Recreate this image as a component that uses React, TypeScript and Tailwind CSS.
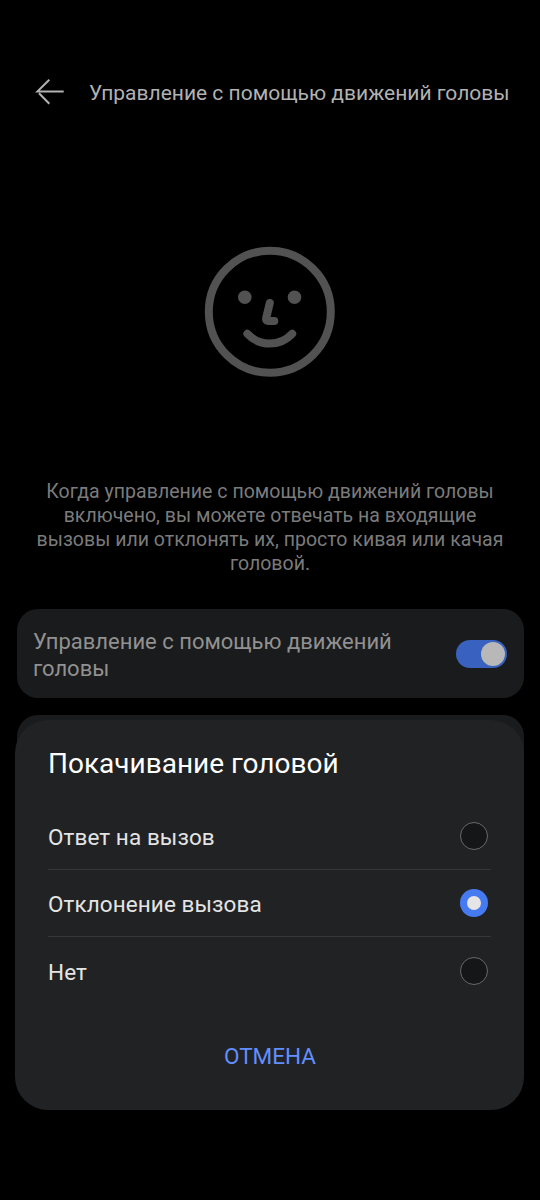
const options = [
  { label: 'Ответ на вызов', selected: false },
  { label: 'Отклонение вызова', selected: true },
  { label: 'Нет', selected: false },
];

function BackArrow() {
  return (
    <svg className="h-[28px] w-[30px] shrink-0" viewBox="0 0 30 28" fill="none" stroke="#b2b2b2" strokeWidth="2" strokeLinecap="butt">
      <path d="M14.3 1.8 2.3 13.6H28.7M4 15.3 14.3 25.8" />
    </svg>
  );
}

function Face() {
  return (
    <svg className="h-[132px] w-[132px]" viewBox="0 0 132 132" fill="none" stroke="#525252" strokeWidth="8" strokeLinecap="round" strokeLinejoin="round">
      <circle cx="65.8" cy="65.8" r="61" />
      <circle cx="40.8" cy="51.2" r="6.8" fill="#525252" stroke="none" />
      <circle cx="90.5" cy="51.2" r="6.8" fill="#525252" stroke="none" />
      <path d="M65.8 57 62.1 72.3Q61.5 74.9 64 74.9H70.3" />
      <path d="M43.4 87.8A30.500 30.500 0 0 0 88.200 87.800" />
    </svg>
  );
}

function Radio({ selected }: { selected: boolean }) {
  return selected ? (
    <span className="flex size-7 items-center justify-center rounded-full bg-[#457af0]">
      <span className="size-[14px] rounded-full bg-[#e5e5e5]" />
    </span>
  ) : (
    <span className="size-7 rounded-full border border-[#68696b] bg-[#151617]" />
  );
}

export default function App() {
  return (
    <div className="relative h-[1200px] w-[540px] overflow-hidden bg-black font-[Roboto,sans-serif]">
      <header className="flex h-[120px] items-end pl-[35px] pt-16">
        <div className="flex h-14 items-center">
          <BackArrow />
          <h1 className="ml-6 whitespace-nowrap pt-0.5 text-[21px] leading-7 text-[#b2b2b2]">Управление с помощью движений головы</h1>
        </div>
      </header>
      <main className="px-[16.5px]">
        <div className="flex justify-center pt-[126px]">
          <Face />
        </div>
        <p className="mt-[102px] text-center text-[19.5px] leading-6 tracking-[0.02px] text-[#7b7b7b]">
          Когда управление с помощью движений головы
          <br />
          включено, вы можете отвечать на входящие
          <br />
          вызовы или отклонять их, просто кивая или качая
          <br />
          головой.
        </p>
        <section className="mt-[33px] flex h-[89px] items-center justify-between rounded-[21px] bg-[#1a1b1c] pl-[16.5px] pr-[16.5px]">
          <p className="pt-0.5 text-[22px] leading-[27px] text-[#919191]">
            Управление с помощью движений
            <br />
            головы
          </p>
          <span className="flex h-7 w-[51px] items-center justify-end rounded-full bg-[#3961c0] pr-[2px]">
            <span className="size-6 rounded-full bg-[#b8b8b8]" />
          </span>
        </section>
        <section className="mt-[17px] h-[120px] rounded-[21px] bg-[#1a1b1c]" />
      </main>
      <div role="dialog" className="absolute bottom-[90px] left-[15px] right-[16px] top-[720px] flex flex-col rounded-[33px] bg-[#212224] px-[33px] pt-[26px]">
        <h2 className="text-[28px] leading-9 text-white">Покачивание головой</h2>
        <div className="mt-[20px] flex flex-col">
          {options.map((option, index) => (
            <div
              key={option.label}
              className={
                index < 2
                  ? 'flex h-[67.5px] items-center justify-between border-b border-[#353638] pr-[3px] pt-px'
                  : 'flex h-[67.5px] items-center justify-between pr-[3px]'
              }
            >
              <span className="pt-[2px] text-[22.5px] leading-7 tracking-[0.08px] text-[#e4e4e4]">{option.label}</span>
              <Radio selected={option.selected} />
            </div>
          ))}
        </div>
        <button className="mt-[37px] pl-px text-center text-[22.5px] leading-7 text-[#628fff]">ОТМЕНА</button>
      </div>
    </div>
  );
}
